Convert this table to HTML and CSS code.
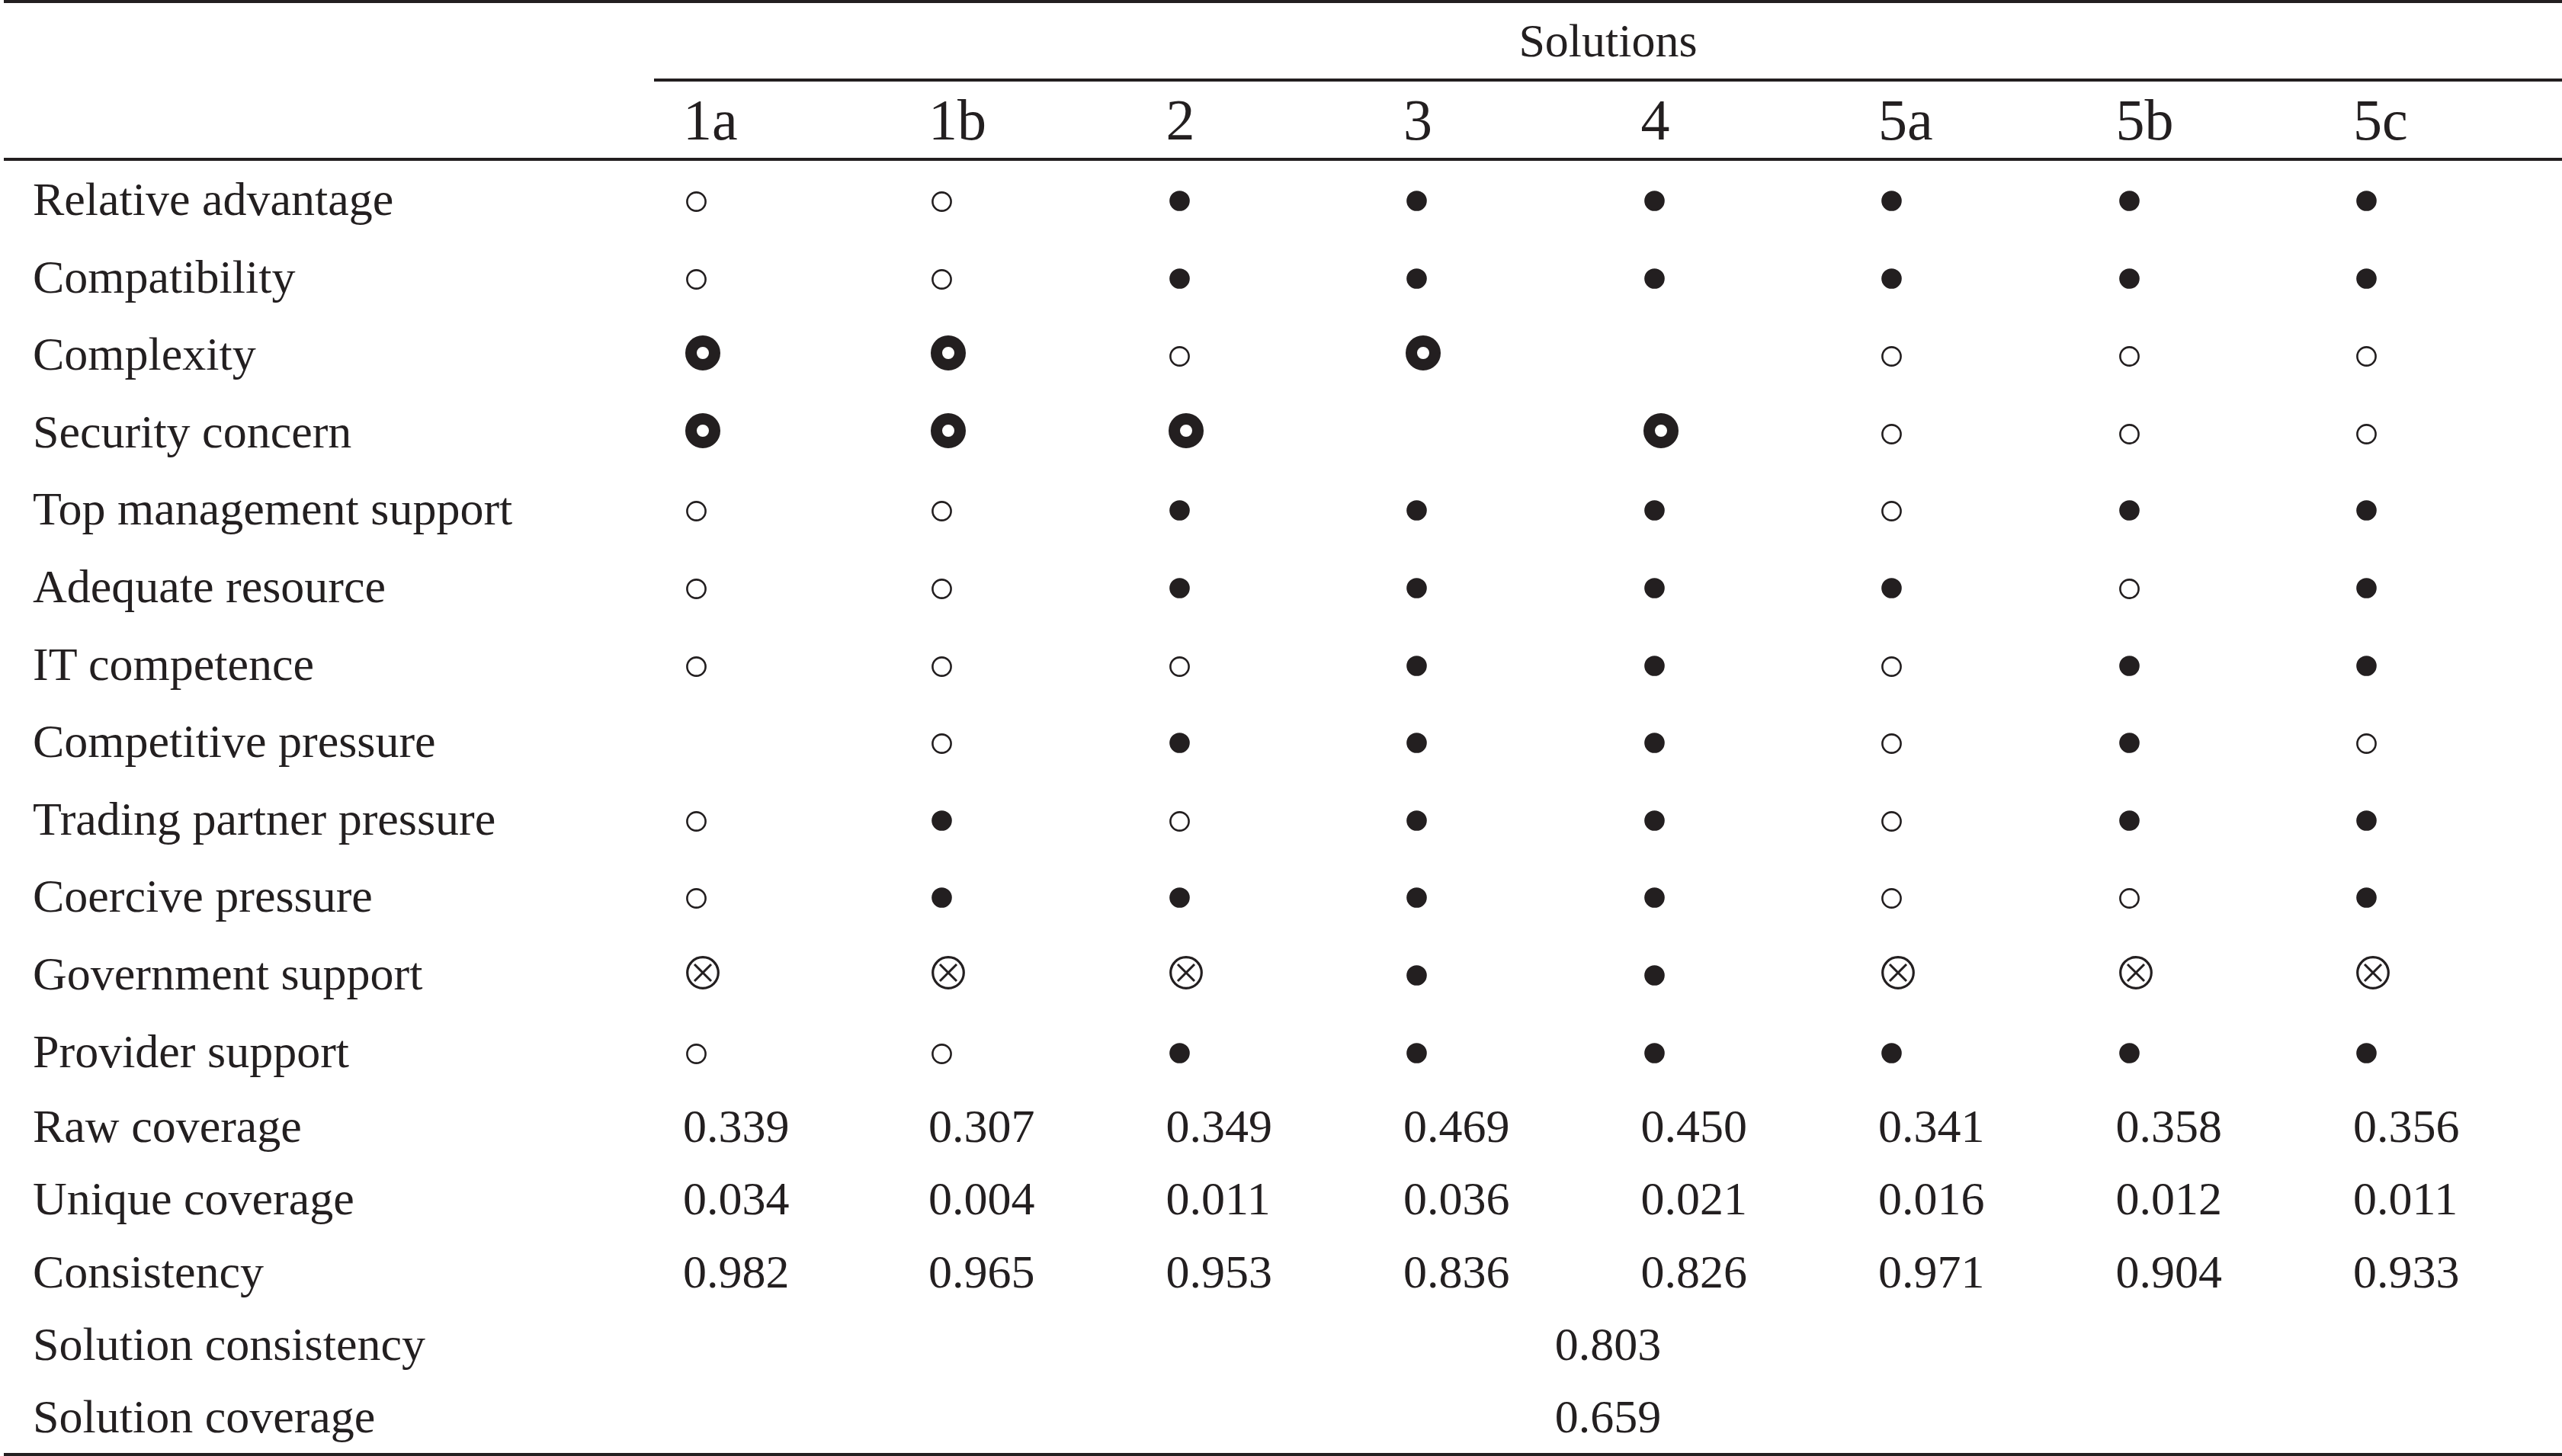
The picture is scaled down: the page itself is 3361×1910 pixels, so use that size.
FILE: index.html
```html
<!DOCTYPE html>
<html lang="en">
<head>
<meta charset="utf-8">
<title>Configurations for adoption</title>
<link rel="stylesheet" href="styles.css">
</head>
<body>
<svg class="defs" width="0" height="0" aria-hidden="true">
  <defs>
    <symbol id="open" viewBox="0 0 27 27"><circle cx="13.5" cy="13.5" r="12.1" fill="none" stroke="currentColor" stroke-width="2.6"/></symbol>
    <symbol id="full" viewBox="0 0 27 27"><circle cx="13.5" cy="13.5" r="13.3" fill="currentColor"/></symbol>
    <symbol id="core" viewBox="0 0 46 46"><circle cx="23" cy="23" r="15.5" fill="none" stroke="currentColor" stroke-width="15"/></symbol>
    <symbol id="absent" viewBox="0 0 44 44"><circle cx="22" cy="22" r="20.3" fill="none" stroke="currentColor" stroke-width="3.2"/><path d="M11 11 L33 33 M33 11 L11 33" stroke="currentColor" stroke-width="3" fill="none"/></symbol>
  </defs>
</svg>
<div class="page">
<table class="qca">
  <colgroup>
    <col class="c-label">
    <col class="c-first">
    <col class="c-mid" span="6">
    <col class="c-last">
  </colgroup>
  <thead>
    <tr class="r-group">
      <th class="corner" rowspan="2"></th>
      <th class="group" colspan="8">Solutions</th>
    </tr>
    <tr class="r-head">
      <th class="first">1a</th><th>1b</th><th>2</th><th>3</th><th>4</th><th>5a</th><th>5b</th><th>5c</th>
    </tr>
  </thead>
  <tbody>
    <tr class="cond">
      <th class="label">Relative advantage</th>
      <td class="first"><svg class="sym s-open"><use href="#open"/></svg></td>
      <td><svg class="sym s-open"><use href="#open"/></svg></td>
      <td><svg class="sym s-full"><use href="#full"/></svg></td>
      <td><svg class="sym s-full"><use href="#full"/></svg></td>
      <td><svg class="sym s-full"><use href="#full"/></svg></td>
      <td><svg class="sym s-full"><use href="#full"/></svg></td>
      <td><svg class="sym s-full"><use href="#full"/></svg></td>
      <td><svg class="sym s-full"><use href="#full"/></svg></td>
    </tr>
    <tr class="cond">
      <th class="label">Compatibility</th>
      <td class="first"><svg class="sym s-open"><use href="#open"/></svg></td>
      <td><svg class="sym s-open"><use href="#open"/></svg></td>
      <td><svg class="sym s-full"><use href="#full"/></svg></td>
      <td><svg class="sym s-full"><use href="#full"/></svg></td>
      <td><svg class="sym s-full"><use href="#full"/></svg></td>
      <td><svg class="sym s-full"><use href="#full"/></svg></td>
      <td><svg class="sym s-full"><use href="#full"/></svg></td>
      <td><svg class="sym s-full"><use href="#full"/></svg></td>
    </tr>
    <tr class="cond">
      <th class="label">Complexity</th>
      <td class="first"><svg class="sym s-core"><use href="#core"/></svg></td>
      <td><svg class="sym s-core"><use href="#core"/></svg></td>
      <td><svg class="sym s-open"><use href="#open"/></svg></td>
      <td><svg class="sym s-core"><use href="#core"/></svg></td>
      <td></td>
      <td><svg class="sym s-open"><use href="#open"/></svg></td>
      <td><svg class="sym s-open"><use href="#open"/></svg></td>
      <td><svg class="sym s-open"><use href="#open"/></svg></td>
    </tr>
    <tr class="cond">
      <th class="label">Security concern</th>
      <td class="first"><svg class="sym s-core"><use href="#core"/></svg></td>
      <td><svg class="sym s-core"><use href="#core"/></svg></td>
      <td><svg class="sym s-core"><use href="#core"/></svg></td>
      <td></td>
      <td><svg class="sym s-core"><use href="#core"/></svg></td>
      <td><svg class="sym s-open"><use href="#open"/></svg></td>
      <td><svg class="sym s-open"><use href="#open"/></svg></td>
      <td><svg class="sym s-open"><use href="#open"/></svg></td>
    </tr>
    <tr class="cond">
      <th class="label">Top management support</th>
      <td class="first"><svg class="sym s-open"><use href="#open"/></svg></td>
      <td><svg class="sym s-open"><use href="#open"/></svg></td>
      <td><svg class="sym s-full"><use href="#full"/></svg></td>
      <td><svg class="sym s-full"><use href="#full"/></svg></td>
      <td><svg class="sym s-full"><use href="#full"/></svg></td>
      <td><svg class="sym s-open"><use href="#open"/></svg></td>
      <td><svg class="sym s-full"><use href="#full"/></svg></td>
      <td><svg class="sym s-full"><use href="#full"/></svg></td>
    </tr>
    <tr class="cond">
      <th class="label">Adequate resource</th>
      <td class="first"><svg class="sym s-open"><use href="#open"/></svg></td>
      <td><svg class="sym s-open"><use href="#open"/></svg></td>
      <td><svg class="sym s-full"><use href="#full"/></svg></td>
      <td><svg class="sym s-full"><use href="#full"/></svg></td>
      <td><svg class="sym s-full"><use href="#full"/></svg></td>
      <td><svg class="sym s-full"><use href="#full"/></svg></td>
      <td><svg class="sym s-open"><use href="#open"/></svg></td>
      <td><svg class="sym s-full"><use href="#full"/></svg></td>
    </tr>
    <tr class="cond">
      <th class="label">IT competence</th>
      <td class="first"><svg class="sym s-open"><use href="#open"/></svg></td>
      <td><svg class="sym s-open"><use href="#open"/></svg></td>
      <td><svg class="sym s-open"><use href="#open"/></svg></td>
      <td><svg class="sym s-full"><use href="#full"/></svg></td>
      <td><svg class="sym s-full"><use href="#full"/></svg></td>
      <td><svg class="sym s-open"><use href="#open"/></svg></td>
      <td><svg class="sym s-full"><use href="#full"/></svg></td>
      <td><svg class="sym s-full"><use href="#full"/></svg></td>
    </tr>
    <tr class="cond">
      <th class="label">Competitive pressure</th>
      <td class="first"></td>
      <td><svg class="sym s-open"><use href="#open"/></svg></td>
      <td><svg class="sym s-full"><use href="#full"/></svg></td>
      <td><svg class="sym s-full"><use href="#full"/></svg></td>
      <td><svg class="sym s-full"><use href="#full"/></svg></td>
      <td><svg class="sym s-open"><use href="#open"/></svg></td>
      <td><svg class="sym s-full"><use href="#full"/></svg></td>
      <td><svg class="sym s-open"><use href="#open"/></svg></td>
    </tr>
    <tr class="cond">
      <th class="label">Trading partner pressure</th>
      <td class="first"><svg class="sym s-open"><use href="#open"/></svg></td>
      <td><svg class="sym s-full"><use href="#full"/></svg></td>
      <td><svg class="sym s-open"><use href="#open"/></svg></td>
      <td><svg class="sym s-full"><use href="#full"/></svg></td>
      <td><svg class="sym s-full"><use href="#full"/></svg></td>
      <td><svg class="sym s-open"><use href="#open"/></svg></td>
      <td><svg class="sym s-full"><use href="#full"/></svg></td>
      <td><svg class="sym s-full"><use href="#full"/></svg></td>
    </tr>
    <tr class="cond">
      <th class="label">Coercive pressure</th>
      <td class="first"><svg class="sym s-open"><use href="#open"/></svg></td>
      <td><svg class="sym s-full"><use href="#full"/></svg></td>
      <td><svg class="sym s-full"><use href="#full"/></svg></td>
      <td><svg class="sym s-full"><use href="#full"/></svg></td>
      <td><svg class="sym s-full"><use href="#full"/></svg></td>
      <td><svg class="sym s-open"><use href="#open"/></svg></td>
      <td><svg class="sym s-open"><use href="#open"/></svg></td>
      <td><svg class="sym s-full"><use href="#full"/></svg></td>
    </tr>
    <tr class="cond">
      <th class="label">Government support</th>
      <td class="first"><svg class="sym s-absent"><use href="#absent"/></svg></td>
      <td><svg class="sym s-absent"><use href="#absent"/></svg></td>
      <td><svg class="sym s-absent"><use href="#absent"/></svg></td>
      <td><svg class="sym s-full"><use href="#full"/></svg></td>
      <td><svg class="sym s-full"><use href="#full"/></svg></td>
      <td><svg class="sym s-absent"><use href="#absent"/></svg></td>
      <td><svg class="sym s-absent"><use href="#absent"/></svg></td>
      <td><svg class="sym s-absent"><use href="#absent"/></svg></td>
    </tr>
    <tr class="cond">
      <th class="label">Provider support</th>
      <td class="first"><svg class="sym s-open"><use href="#open"/></svg></td>
      <td><svg class="sym s-open"><use href="#open"/></svg></td>
      <td><svg class="sym s-full"><use href="#full"/></svg></td>
      <td><svg class="sym s-full"><use href="#full"/></svg></td>
      <td><svg class="sym s-full"><use href="#full"/></svg></td>
      <td><svg class="sym s-full"><use href="#full"/></svg></td>
      <td><svg class="sym s-full"><use href="#full"/></svg></td>
      <td><svg class="sym s-full"><use href="#full"/></svg></td>
    </tr>
    <tr class="stat">
      <th class="label">Raw coverage</th>
      <td class="first">0.339</td><td>0.307</td><td>0.349</td><td>0.469</td><td>0.450</td><td>0.341</td><td>0.358</td><td>0.356</td>
    </tr>
    <tr class="stat">
      <th class="label">Unique coverage</th>
      <td class="first">0.034</td><td>0.004</td><td>0.011</td><td>0.036</td><td>0.021</td><td>0.016</td><td>0.012</td><td>0.011</td>
    </tr>
    <tr class="stat">
      <th class="label">Consistency</th>
      <td class="first">0.982</td><td>0.965</td><td>0.953</td><td>0.836</td><td>0.826</td><td>0.971</td><td>0.904</td><td>0.933</td>
    </tr>
    <tr class="stat">
      <th class="label">Solution consistency</th>
      <td class="span" colspan="8">0.803</td>
    </tr>
    <tr class="stat">
      <th class="label">Solution coverage</th>
      <td class="span" colspan="8">0.659</td>
    </tr>
  </tbody>
</table>
</div>
</body>
</html>
```
FILE: styles.css
```css
html, body {
  margin: 0;
  padding: 0;
  background: #ffffff;
}

body {
  color: #231f20;
  font-family: "Liberation Serif", "Times New Roman", serif;
  font-size: 62px;
}

.defs {
  display: block;
  width: 0;
  height: 0;
  overflow: hidden;
}

.page {
  padding-left: 5px;
}

.qca {
  width: 3356px;
  table-layout: fixed;
  border-collapse: separate;
  border-spacing: 0;
  border-top: 4px solid #231f20;
  border-bottom: 4px solid #231f20;
}

.c-label { width: 853px; }
.c-first { width: 320px; }
.c-mid { width: 311.5px; }
.c-last { width: 314px; }

.qca th,
.qca td {
  padding: 0 0 0 40px;
  text-align: left;
  font-weight: normal;
  white-space: nowrap;
  vertical-align: top;
}

.qca .first { padding-left: 38px; }
.qca .label { padding-left: 38px; }

.corner {
  border-bottom: 4px solid #231f20;
}

.r-group .group {
  padding: 0;
  text-align: center;
  font-size: 62px;
  line-height: 99px;
  border-bottom: 4px solid #231f20;
}

.r-head th {
  font-size: 76px;
  line-height: 100px;
  border-bottom: 4px solid #231f20;
}

.cond th,
.cond td {
  line-height: 101.6px;
}

.stat th,
.stat td {
  line-height: 95.2px;
}

.qca .span {
  padding: 0;
  text-align: center;
}

.sym {
  display: inline-block;
  margin-left: 4px;
  color: #231f20;
}

.s-open {
  width: 27px;
  height: 27px;
  vertical-align: 4px;
}

.s-full {
  width: 27px;
  height: 27px;
  vertical-align: 5px;
}

.s-core {
  width: 46px;
  height: 46px;
  margin-left: 3px;
  vertical-align: -1px;
}

.s-absent {
  width: 44px;
  height: 44px;
  vertical-align: 0;
}
```
